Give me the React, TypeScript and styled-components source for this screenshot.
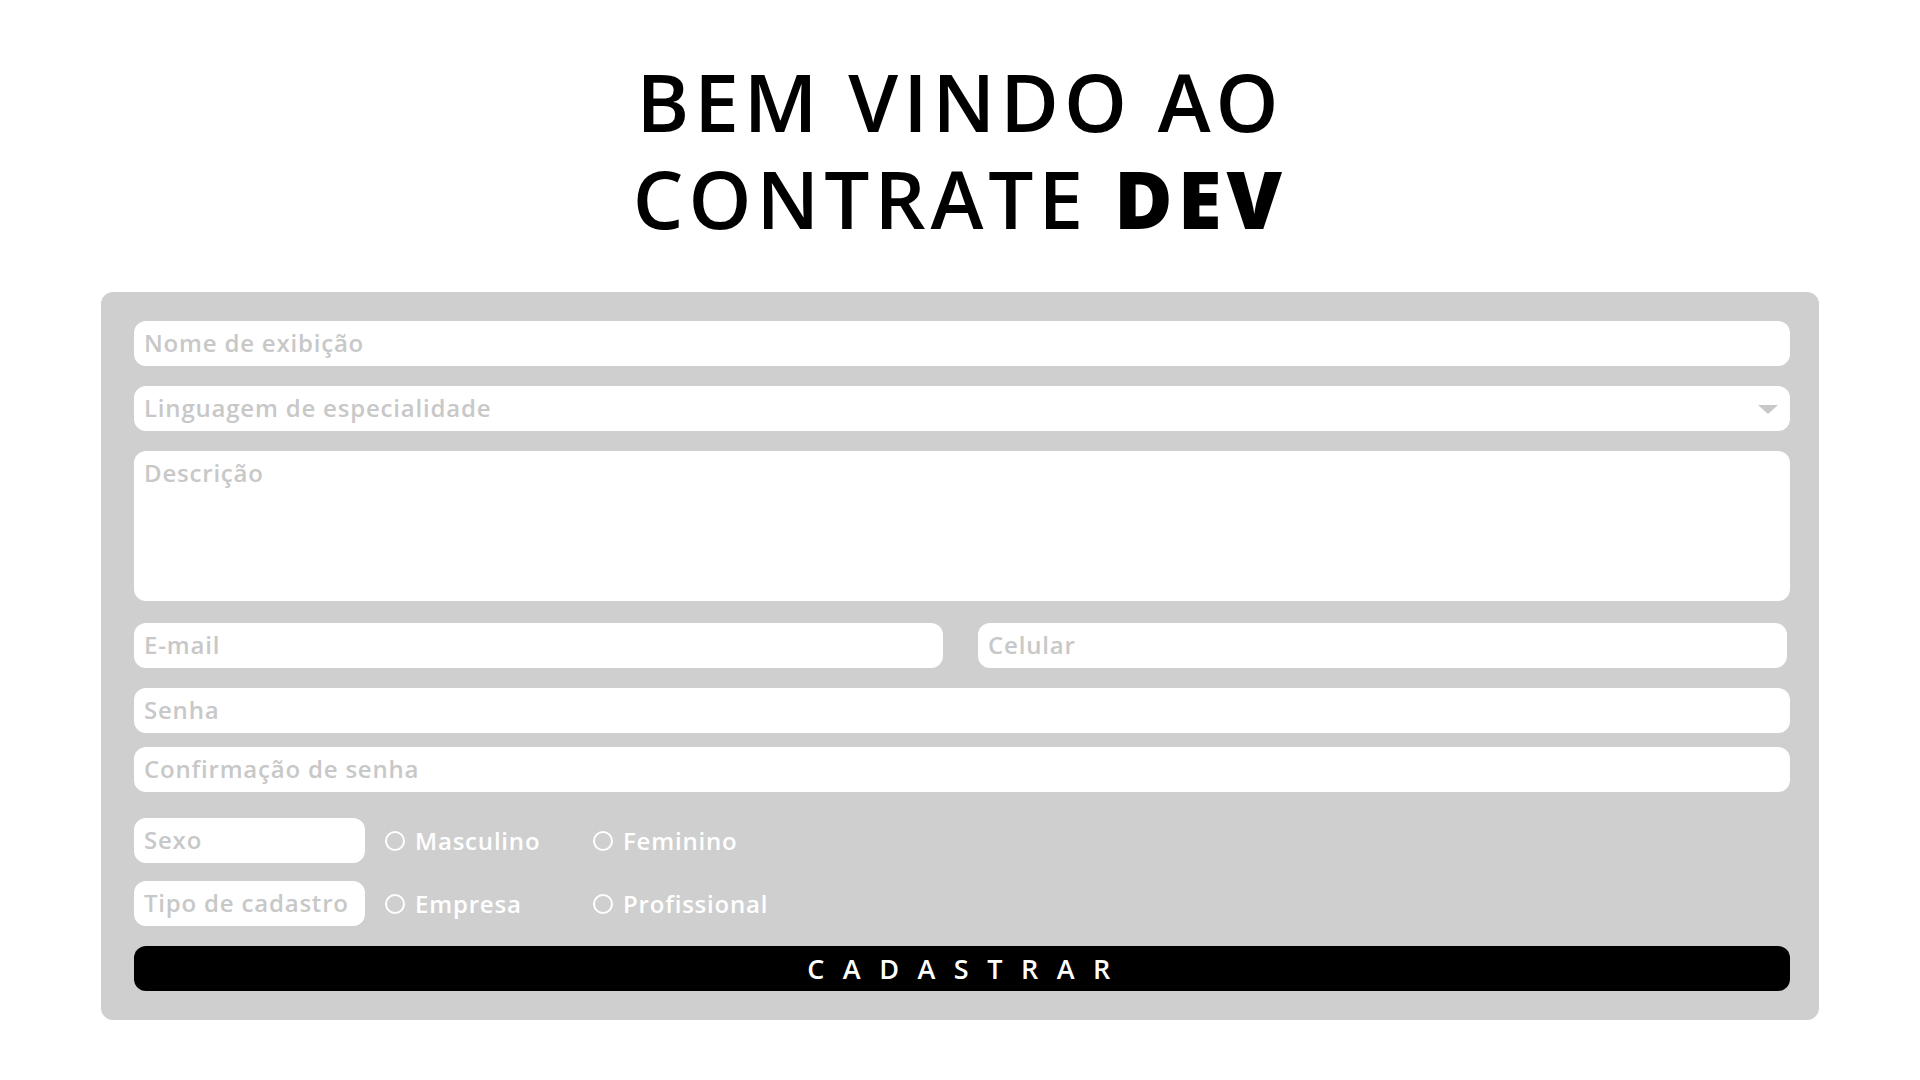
import React from "react";
import styled, { createGlobalStyle } from "styled-components";

const GlobalStyle = createGlobalStyle`
  html, body {
    margin: 0;
    padding: 0;
    background: #ffffff;
    font-family: "Open Sans", "Liberation Sans", sans-serif;
  }
  * { box-sizing: border-box; }
`;

const Page = styled.main`
  width: 1920px;
  min-height: 1080px;
  display: flex;
  flex-direction: column;
  align-items: center;
  padding-top: 52px;
`;

const Title = styled.h1`
  margin: 0;
  font-family: "Open Sans", "Liberation Sans", sans-serif;
  font-size: 80px;
  line-height: 97px;
  font-weight: 600;
  letter-spacing: 5px;
  text-align: center;
  color: #000000;
`;

const TitleLine = styled.span`
  display: block;
  white-space: nowrap;
`;

const Strong = styled.strong`
  font-weight: 800;
`;

const Panel = styled.form`
  margin-top: 46px;
  width: 1718px;
  background: #cfcfcf;
  border-radius: 12px;
  padding: 29px 29px 29px 33px;
  display: flex;
  flex-direction: column;
`;

const fieldBase = `
  display: block;
  width: 100%;
  height: 45px;
  border: none;
  outline: none;
  border-radius: 12px;
  background: #ffffff;
  padding: 0 10px;
  font-family: "Open Sans", "Liberation Sans", sans-serif;
  font-size: 24px;
  font-weight: 600;
  letter-spacing: 0.8px;
  color: #333333;
  &::placeholder { color: #c8c8c8; opacity: 1; }
`;

const Input = styled.input<{ $mt?: number; $w?: number }>`
  ${fieldBase}
  margin-top: ${(p) => p.$mt ?? 0}px;
  ${(p) => (p.$w ? `width: ${p.$w}px; flex: none;` : "")}
  padding-bottom: 3px;
`;

const SelectWrap = styled.div`
  position: relative;
  margin-top: 20px;
`;

const Select = styled.select`
  ${fieldBase}
  appearance: none;
  -webkit-appearance: none;
  color: #c8c8c8;
  padding-bottom: 3px;
`;

const Arrow = styled.svg`
  position: absolute;
  right: 12px;
  top: 19px;
  pointer-events: none;
`;

const TextArea = styled.textarea`
  ${fieldBase}
  height: 150px;
  margin-top: 20px;
  resize: none;
  padding-top: 5px;
`;

const Row = styled.div<{ $mt: number }>`
  display: flex;
  align-items: center;
  gap: 35px;
  margin-top: ${(p) => p.$mt}px;
`;

const ChoiceRow = styled.div<{ $mt: number }>`
  display: flex;
  align-items: center;
  margin-top: ${(p) => p.$mt}px;
`;

const SmallInput = styled.input`
  ${fieldBase}
  width: 231px;
  flex: none;
  padding-bottom: 3px;
`;

const Options = styled.div`
  display: flex;
  margin-left: 20px;
`;

const Option = styled.label`
  width: 208px;
  display: flex;
  align-items: center;
  gap: 10px;
  font-family: "Open Sans", "Liberation Sans", sans-serif;
  font-size: 24px;
  font-weight: 600;
  letter-spacing: 0.8px;
  color: #ffffff;
  cursor: pointer;
`;

const Radio = styled.input.attrs({ type: "radio" })`
  appearance: none;
  -webkit-appearance: none;
  margin: 0;
  width: 20px;
  height: 20px;
  border: 2px solid #ffffff;
  border-radius: 50%;
  background: transparent;
  flex: none;
`;

const Submit = styled.button`
  margin-top: 20px;
  height: 45px;
  width: 100%;
  border: none;
  border-radius: 12px;
  background: #000000;
  color: #ffffff;
  font-family: "Open Sans", "Liberation Sans", sans-serif;
  font-size: 27px;
  font-weight: 600;
  letter-spacing: 18.5px;
  padding-left: 18px;
  cursor: pointer;
`;

export default function App() {
  return (
    <>
      <GlobalStyle />
      <Page>
        <Title>
          <TitleLine>BEM VINDO AO</TitleLine>
          <TitleLine>
            CONTRATE <Strong>DEV</Strong>
          </TitleLine>
        </Title>
        <Panel onSubmit={(e) => e.preventDefault()}>
          <Input placeholder="Nome de exibição" />
          <SelectWrap>
            <Select defaultValue="">
              <option value="" disabled>
                Linguagem de especialidade
              </option>
              <option value="js">JavaScript</option>
              <option value="py">Python</option>
              <option value="java">Java</option>
            </Select>
            <Arrow width="20" height="9" viewBox="0 0 20 9">
              <polygon points="0,0 20,0 10,9" fill="#c8c8c8" />
            </Arrow>
          </SelectWrap>
          <TextArea placeholder="Descrição" />
          <Row $mt={22}>
            <Input $w={809} type="email" placeholder="E-mail" />
            <Input $w={809} type="tel" placeholder="Celular" />
          </Row>
          <Input $mt={20} type="password" placeholder="Senha" />
          <Input $mt={14} type="password" placeholder="Confirmação de senha" />
          <ChoiceRow $mt={26}>
            <SmallInput placeholder="Sexo" readOnly />
            <Options>
              <Option>
                <Radio name="sexo" />
                Masculino
              </Option>
              <Option>
                <Radio name="sexo" />
                Feminino
              </Option>
            </Options>
          </ChoiceRow>
          <ChoiceRow $mt={18}>
            <SmallInput placeholder="Tipo de cadastro" readOnly />
            <Options>
              <Option>
                <Radio name="tipo" />
                Empresa
              </Option>
              <Option>
                <Radio name="tipo" />
                Profissional
              </Option>
            </Options>
          </ChoiceRow>
          <Submit type="submit">CADASTRAR</Submit>
        </Panel>
      </Page>
    </>
  );
}
